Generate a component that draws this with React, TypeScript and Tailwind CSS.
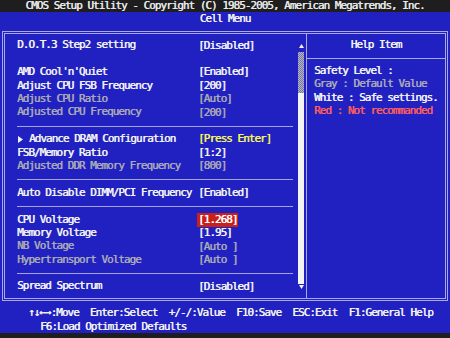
import React from "react"

type Row =
  | { kind: "item"; label: string; value: string; tone: "white" | "gray" | "dram" | "red" }
  | { kind: "blank" }
  | { kind: "sep" }

const rows: Row[] = [
  { kind: "item", label: "D.O.T.3 Step2 setting", value: "[Disabled]", tone: "white" },
  { kind: "blank" },
  { kind: "item", label: "AMD Cool'n'Quiet", value: "[Enabled]", tone: "white" },
  { kind: "item", label: "Adjust CPU FSB Frequency", value: "[200]", tone: "white" },
  { kind: "item", label: "Adjust CPU Ratio", value: "[Auto]", tone: "gray" },
  { kind: "item", label: "Adjusted CPU Frequency", value: "[200]", tone: "gray" },
  { kind: "sep" },
  { kind: "item", label: "Advance DRAM Configuration", value: "[Press Enter]", tone: "dram" },
  { kind: "item", label: "FSB/Memory Ratio", value: "[1:2]", tone: "white" },
  { kind: "item", label: "Adjusted DDR Memory Frequency", value: "[800]", tone: "gray" },
  { kind: "sep" },
  { kind: "item", label: "Auto Disable DIMM/PCI Frequency", value: "[Enabled]", tone: "white" },
  { kind: "sep" },
  { kind: "item", label: "CPU Voltage", value: "[1.268]", tone: "red" },
  { kind: "item", label: "Memory Voltage", value: "[1.95]", tone: "white" },
  { kind: "item", label: "NB Voltage", value: "[Auto ]", tone: "gray" },
  { kind: "item", label: "Hypertransport Voltage", value: "[Auto ]", tone: "gray" },
  { kind: "sep" },
  { kind: "item", label: "Spread Spectrum", value: "[Disabled]", tone: "white" },
]

function SetupRow({ row }: { row: Row }) {
  if (row.kind === "blank") return <div className="h-[13.4px]" />
  if (row.kind === "sep")
    return (
      <div className="h-[13.4px] flex items-center">
        <div className="h-px w-full bg-[#a4a4e4]" />
      </div>
    )

  const labelColor = row.tone === "gray" ? "text-[#a9a9b4]" : "text-[#f2f2f2]"
  let valueClass = "text-[#f2f2f2]"
  if (row.tone === "gray") valueClass = "text-[#a9a9b4]"
  if (row.tone === "dram") valueClass = "text-[#f4f45c]"
  if (row.tone === "red") valueClass = "text-white bg-[#c8201c] -ml-px pl-px pr-px"

  return (
    <div className="h-[13.4px] flex items-center">
      <div className={`w-[181px] whitespace-pre ${labelColor} flex items-center`}>
        {row.tone === "dram" && (
          <svg width="6" height="7" viewBox="0 0 6 7" className="mr-[5px] ml-px">
            <path d="M0 0 L5 3.5 L0 7 Z" fill="#f2f2f2" />
          </svg>
        )}
        {row.label}
      </div>
      <div className={`whitespace-pre leading-[14px] ${valueClass}`}>{row.value}</div>
    </div>
  )
}

function ScrollBar() {
  return (
    <div className="w-[6px] ml-px mr-[2px] flex flex-col items-center pt-[10px] pb-[9px]">
      <svg width="5" height="4" viewBox="0 0 5 4">
        <path d="M2.5 0 L5 4 L0 4 Z" fill="#f2f2f2" />
      </svg>
      <div className="mt-[4px] w-[6px] h-[41px] bg-[repeating-conic-gradient(#b4b4c8_0%_25%,#7a7aa8_0%_50%)] bg-[length:2px_2px]" />
      <div className="w-[6px] flex-1 bg-[#f4f4f4]" />
      <svg width="5" height="4" viewBox="0 0 5 4" className="mt-[1px]">
        <path d="M0 0 L5 0 L2.5 4 Z" fill="#f2f2f2" />
      </svg>
    </div>
  )
}

export default function App() {
  return (
    <div
      className="w-[450px] h-[338px] bg-[#2121c2] flex flex-col overflow-hidden text-[11px] tracking-[-1px] text-[#f2f2f2] [text-shadow:0.4px_0_0_currentColor]"
      style={{ fontFamily: '"DejaVu Sans Mono", "Liberation Mono", monospace' }}
    >
      <div className="h-[12px] bg-[#1e1e1e] text-center leading-[12px] whitespace-pre text-[#e8e8e8]">
        CMOS Setup Utility - Copyright (C) 1985-2005, American Megatrends, Inc.
      </div>
      <div className="h-[19px] text-center leading-[14px]">Cell Menu</div>

      <div className="mx-[2px] h-[270px] border-[3px] border-double border-[#a8a8e8] flex">
        <div className="w-[301px] flex">
          <div className="flex-1 pl-[12px] pr-[4px] pt-[5px]">
            {rows.map((r, i) => (
              <SetupRow key={i} row={r} />
            ))}
          </div>
          <ScrollBar />
        </div>
        <div className="w-px bg-[#a8a8e8]" />
        <div className="flex-1 flex flex-col">
          <div className="h-[25px] pt-[4px] leading-[14px] text-center border-b border-[#a8a8e8]">Help Item</div>
          <div className="pl-[7px] pt-[5px] leading-[13.4px] whitespace-pre">
            <div className="text-[#f2f2f2]">Safety Level :</div>
            <div className="text-[#a9a9b4]">Gray : Default Value</div>
            <div className="text-[#f2f2f2]">White : Safe settings.</div>
            <div className="text-[#ff5c5c]">Red : Not recommanded</div>
          </div>
        </div>
      </div>

      <div className="h-[32px] pt-[5px] leading-[14px] whitespace-pre">
        <div className="pl-[28px]">↑↓←→:Move  Enter:Select  +/-/:Value  F10:Save  ESC:Exit  F1:General Help</div>
        <div className="pl-[40px]">F6:Load Optimized Defaults</div>
      </div>
      <div className="flex-1 bg-[#1e1e1e]" />
    </div>
  )
}
